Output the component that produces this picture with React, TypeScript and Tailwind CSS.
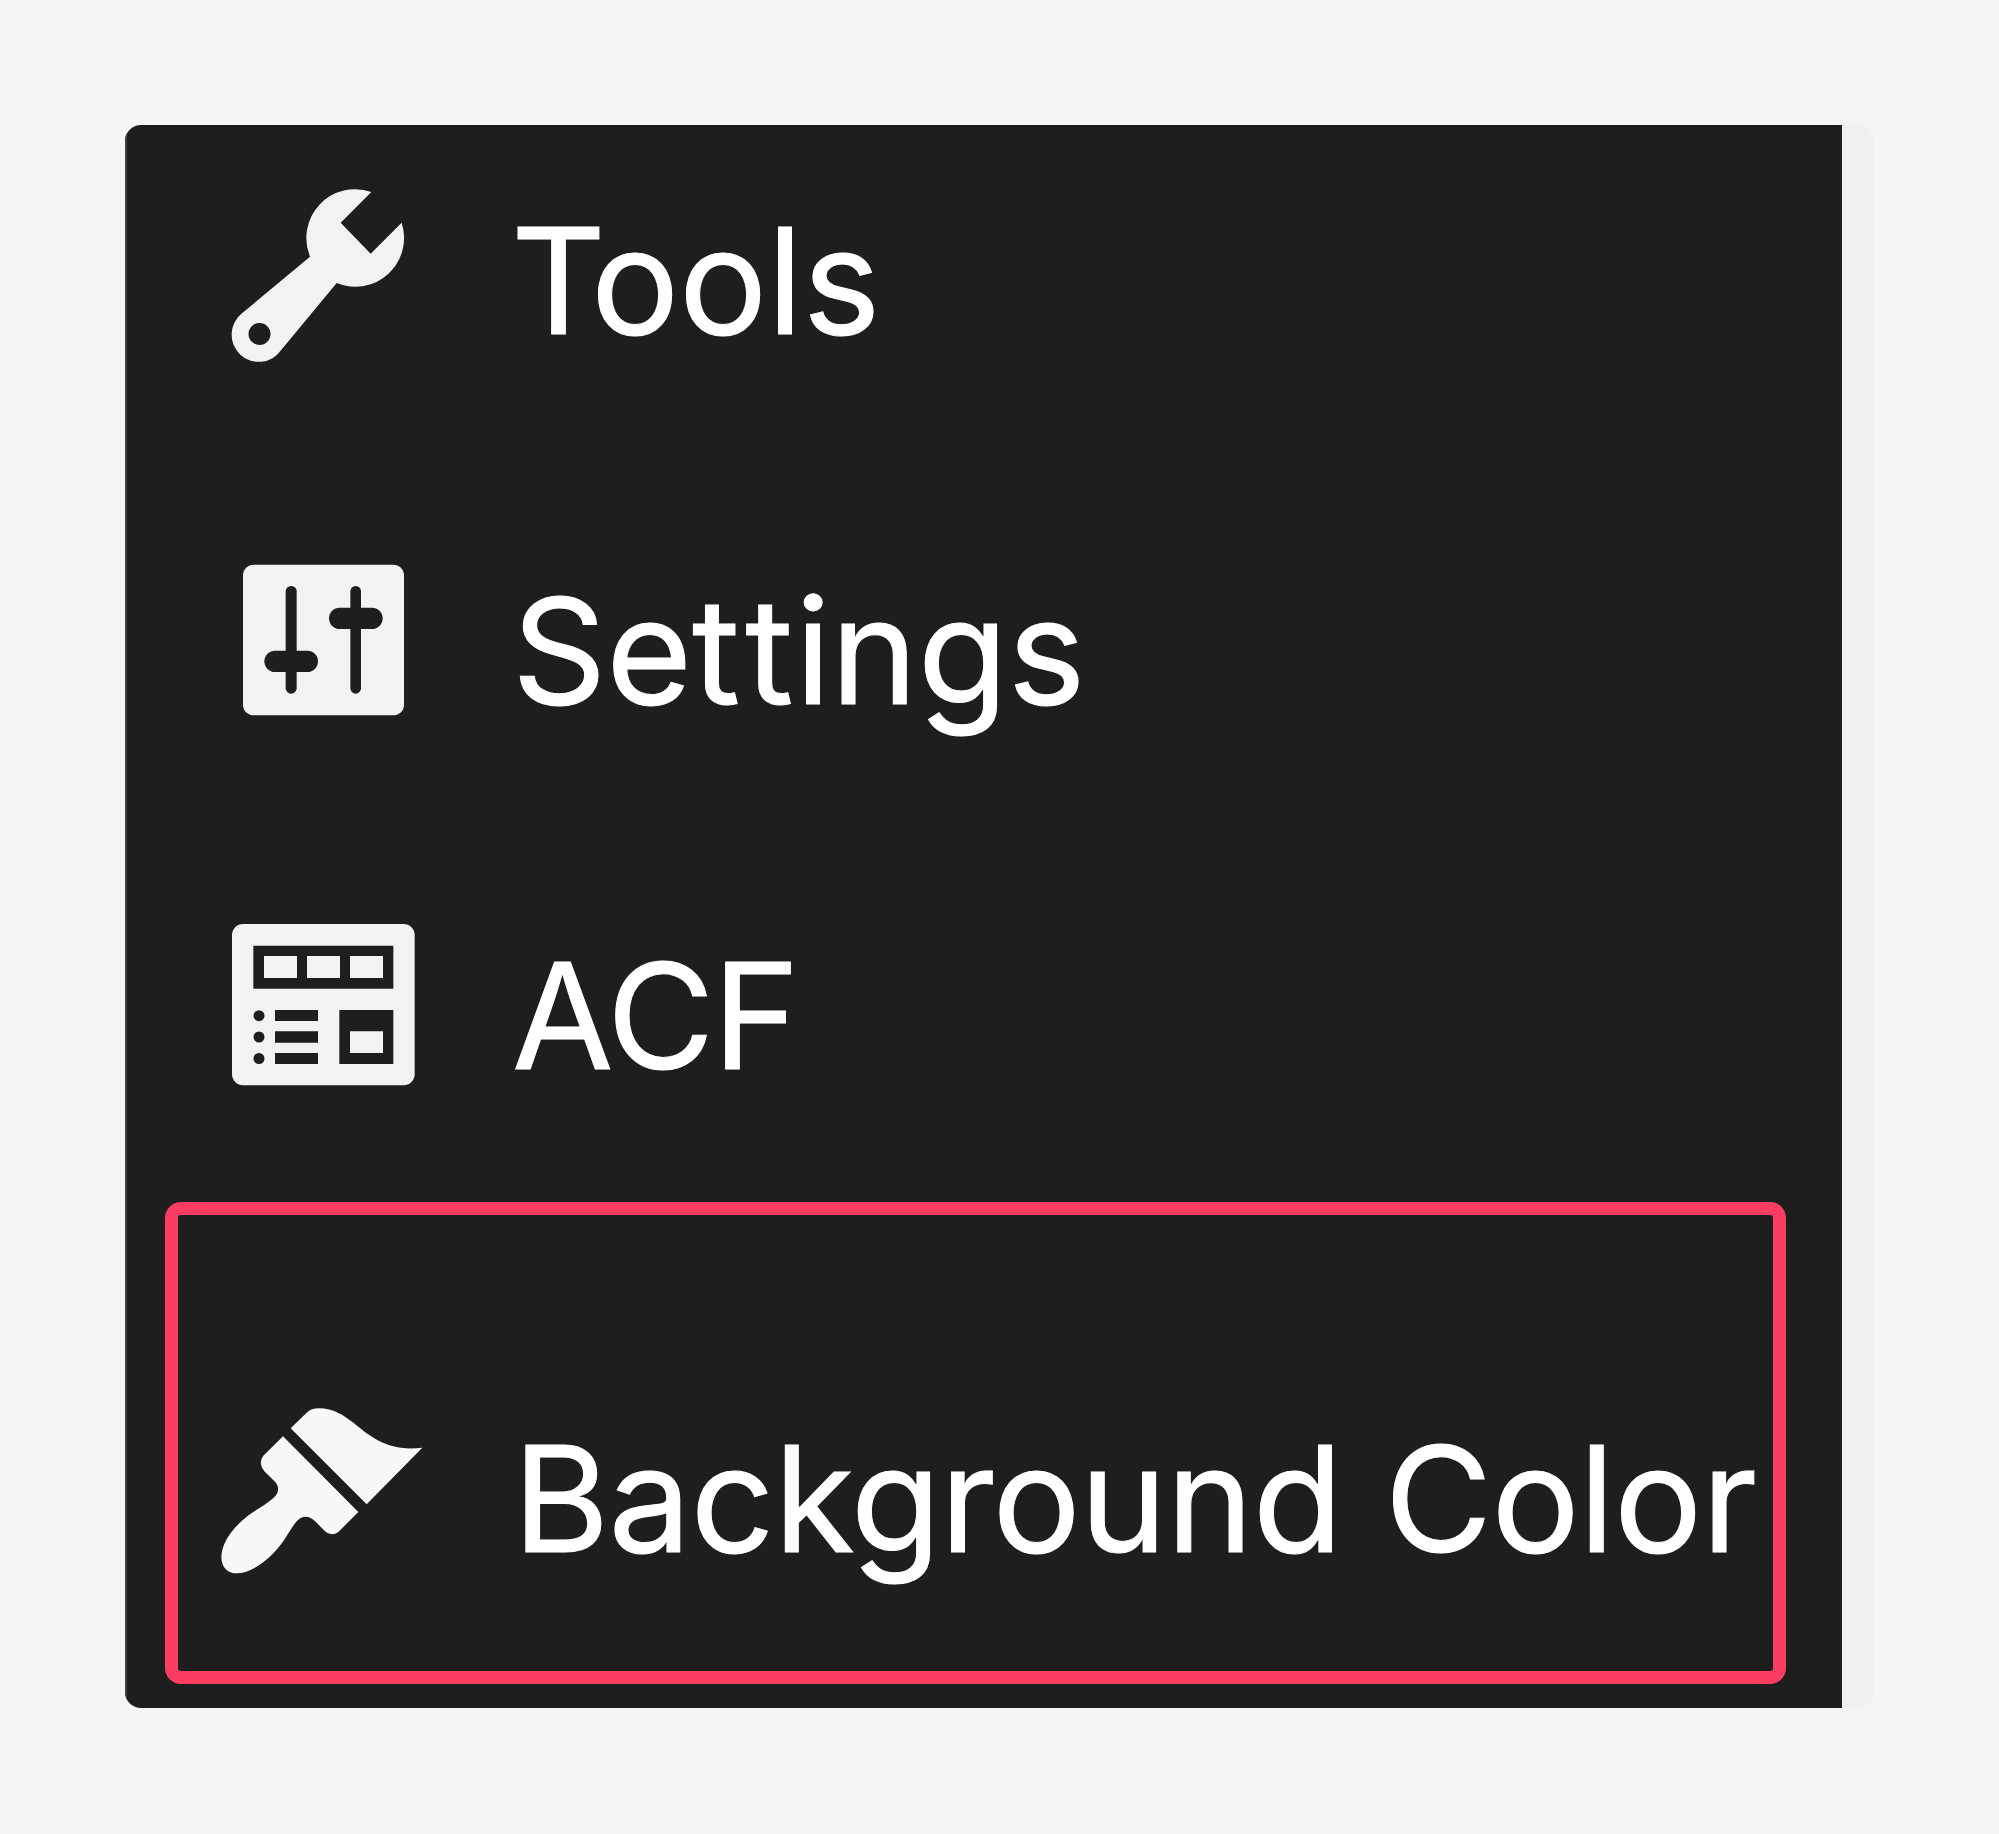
import type { ReactNode } from "react";

function WrenchIcon() {
  return (
    <svg viewBox="-30 0 720 630" className="h-[210px] w-[240px] shrink-0" aria-hidden="true">
      <path
        fill="#f3f1f2"
        fillRule="evenodd"
        d="M484 66 392 158 482 251 575 158A146.500 146.500 0 0 1 380 339L213 541A81.500 81.500 0 1 1 96 430L300 260A146.500 146.500 0 0 1 484 66ZM148.500 459a33 33 0 1 0 0 66a33 33 0 1 0 0-66Z"
      />
    </svg>
  );
}

function SlidersIcon() {
  return (
    <svg viewBox="-60 0 720 570" className="h-[190px] w-[240px] shrink-0" aria-hidden="true">
      <rect x="69" y="59" width="483" height="452" rx="32" fill="#f3f1f2" />
      <g fill="#1e1e1e">
        <rect x="197" y="123" width="33" height="323" rx="16" />
        <rect x="133" y="317" width="161" height="64" rx="32" />
        <rect x="391" y="123" width="32" height="323" rx="16" />
        <rect x="327" y="188" width="161" height="64" rx="32" />
      </g>
    </svg>
  );
}

function FieldsIcon() {
  return (
    <svg viewBox="-30 0 720 600" className="h-[200px] w-[240px] shrink-0" aria-hidden="true">
      <rect x="66" y="57" width="548" height="484" rx="33" fill="#f3f1f2" />
      <g fill="#1e1e1e">
        <path
          fillRule="evenodd"
          d="M130 122H550V251H130ZM162 153V219H261V153ZM291 153V219H390V153ZM420 153V219H519V153Z"
        />
        <path fillRule="evenodd" d="M388 315H550V477H388ZM420 379V444H519V379Z" />
        <path d="M195 315H324V348H195ZM195 379H324V413H195ZM195 444H324V477H195Z" />
        <circle cx="147" cy="332" r="16.500" />
        <circle cx="147" cy="396" r="16.500" />
        <circle cx="147" cy="460.500" r="16.500" />
      </g>
    </svg>
  );
}

function BrushIcon() {
  return (
    <svg viewBox="0 0 720 600" className="h-[200px] w-[240px] shrink-0" aria-hidden="true">
      <g fill="#f8f8f8">
        <path d="M272 115 320 68Q333 55 357 55C400 55 430 75 462 100C510 138 560 186 667 173L500 343Z" />
        <path d="M249 139 475 366 422 419Q397 445 372 421L347 395Q315 365 288 396C262 430 254 455 220 490C185 525 145 550 110 550C83 550 64 532 64 500C66 455 100 412 140 380C170 356 200 345 226 318Q242 300 228 278L193 244Q173 220 190 197Z" />
      </g>
    </svg>
  );
}

function Label({ className, children }: { className: string; children: ReactNode }) {
  return (
    <span
      className={`whitespace-nowrap text-[147px] leading-[178px] text-white [-webkit-text-stroke:1px_white] ${className}`}
    >
      {children}
    </span>
  );
}

export default function App() {
  return (
    <div className="h-[1834px] w-[1999px] bg-[#f3f5f7] p-[125px] font-['Inter',sans-serif]">
      <div className="flex h-[1583px] w-[1749px] overflow-hidden rounded-2xl bg-[#f0f0f0]">
        <nav className="w-[1717px] border-l-2 border-[#3c4144] bg-[#1e1e1e]">
          <ul>
            <li className="flex h-[370px] items-start pl-[73px]">
              <div className="mt-[45px]">
                <WrenchIcon />
              </div>
              <Label className="ml-[71px] mt-[67px]">
                <span className="tracking-[-15px]">T</span>ools
              </Label>
            </li>
            <li className="flex h-[365px] items-start pl-[73px]">
              <div className="mt-[50px]">
                <SlidersIcon />
              </div>
              <Label className="ml-[72px] mt-[67px]">
                Se<span className="tracking-[5px]">t</span>
                <span className="tracking-[2px]">t</span>ings
              </Label>
            </li>
            <li className="flex h-[342px] items-start pl-[73px]">
              <div className="mt-[45px]">
                <FieldsIcon />
              </div>
              <Label className="ml-[72px] mt-[67px] tracking-[-1.5px]">ACF</Label>
            </li>
            <li className="ml-[38px] flex h-[482px] w-[1621px] items-start rounded-2xl border-[13px] border-[#fb3d62] pl-[22px]">
              <div className="mt-[175px]">
                <BrushIcon />
              </div>
              <Label className="ml-[73px] mt-[195px] tracking-[-0.6px] [word-spacing:2px]">
                Background Color
              </Label>
            </li>
          </ul>
        </nav>
      </div>
    </div>
  );
}
